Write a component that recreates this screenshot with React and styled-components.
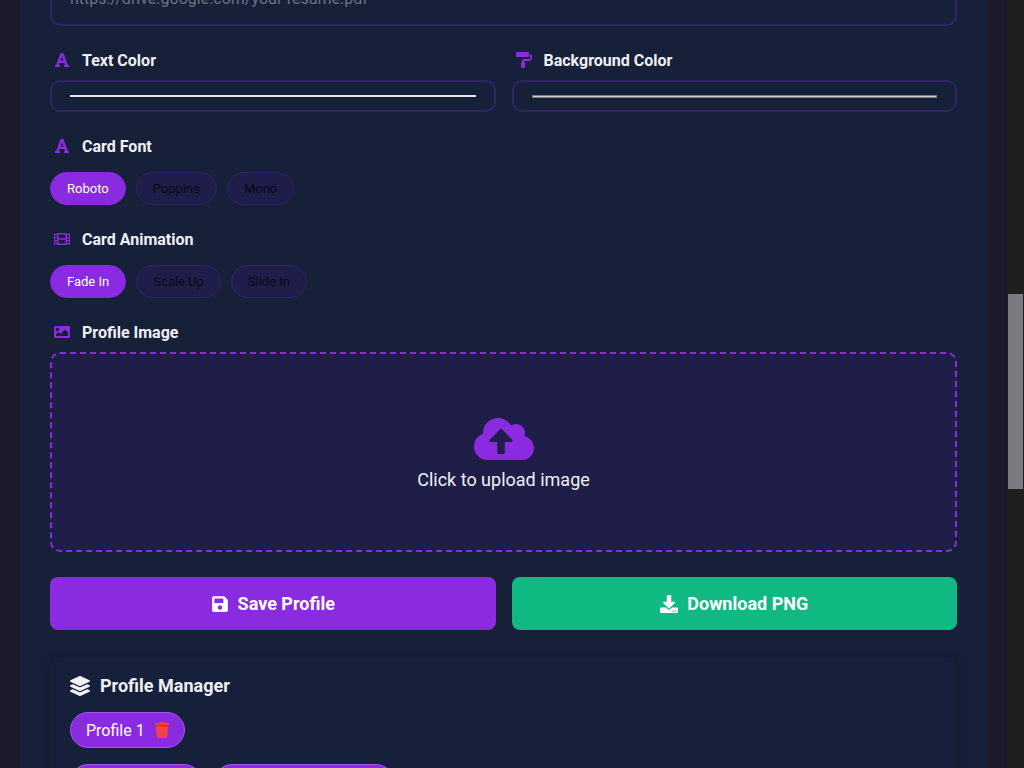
import React from 'react';
import styled, { createGlobalStyle } from 'styled-components';
import { FaFont, FaPaintRoller, FaFilm, FaImage, FaCloudUploadAlt, FaSave, FaDownload, FaLayerGroup, FaTrash } from 'react-icons/fa';

const Global = createGlobalStyle`
  html, body { margin: 0; height: 768px; overflow: hidden; background: #1b1a2b; }
  body { font-family: Roboto, "Liberation Sans", sans-serif; }
`;

const Page = styled.div`
  display: flex;
  height: 768px;
`;

const Gutter = styled.div`
  width: ${p => p.w}px;
  flex-shrink: 0;
`;

const Panel = styled.div`
  width: 967px;
  background: #172039;
  padding: 0 30px;
  box-sizing: border-box;
  overflow: hidden;
`;

const Inner = styled.div`
  margin-top: -30px;
  display: flex;
  flex-direction: column;
`;

const Scrollbar = styled.div`
  width: 17px;
  background: #1f1f1f;
  display: flex;
  flex-direction: column;
  padding-top: 294px;
  box-sizing: border-box;
  .thumb { height: 195px; background: #7a7a80; margin: 0 1px; }
`;

const UrlInput = styled.div`
  height: 56px;
  border: 2px solid #2e2466;
  border-radius: 10px;
  padding: 0 18px;
  color: #6b7280;
  font-size: 16px;
  display: flex;
  align-items: center;
  box-sizing: border-box;
  margin-bottom: 24px;
`;

const Row = styled.div`
  display: grid;
  grid-template-columns: 1fr 1fr;
  gap: 16px;
`;

const Field = styled.div`
  margin-bottom: ${p => p.mb || 24}px;
`;

const Label = styled.div`
  display: flex;
  align-items: center;
  gap: 11px;
  color: #f1f1f5;
  font-weight: 700;
  font-size: 16px;
  height: 20px;
  margin-bottom: 10px;
  svg { color: #8a2be2; width: 18px; height: 16px; margin-left: 3px; }
`;

const ColorBox = styled.div`
  height: 32px;
  border: 2px solid #2e2466;
  border-radius: 10px;
  box-sizing: border-box;
  display: flex;
  align-items: center;
  padding: 0 18px;
  .line {
    flex: 1;
    height: ${p => p.light ? 2 : 3}px;
    background: ${p => p.light ? '#e8e8e8' : '#cfcfcf'};
    border: ${p => p.light ? 'none' : '1px solid #7c7c7c'};
    box-sizing: border-box;
  }
`;

const Chips = styled.div`
  display: flex;
  gap: 10px;
  margin-top: 16px;
`;

const Chip = styled.div`
  height: 33px;
  padding: 0 16px;
  border-radius: 17px;
  box-sizing: border-box;
  display: flex;
  align-items: center;
  font-size: 13px;
  background: ${p => p.active ? '#8a2be2' : '#1f1d4a'};
  border: 1px solid ${p => p.active ? '#8a2be2' : '#2e2466'};
  color: ${p => p.active ? '#fff' : '#0a0a14'};
`;

const Upload = styled.div`
  height: 200px;
  border: 2px dashed #8a2be2;
  border-radius: 10px;
  background: #1e1e48;
  box-sizing: border-box;
  display: flex;
  flex-direction: column;
  align-items: center;
  justify-content: center;
  gap: 6px;
  color: #f1f1f5;
  font-size: 18px;
  svg { color: #8a2be2; width: 64px; height: 48px; }
`;

const Buttons = styled.div`
  display: grid;
  grid-template-columns: 1fr 1fr;
  gap: 16px;
  margin-top: 1px;
  margin-bottom: 27px;
`;

const Button = styled.div`
  height: 53px;
  border-radius: 8px;
  background: ${p => p.bg};
  color: #fff;
  font-size: 18px;
  font-weight: 700;
  display: flex;
  align-items: center;
  justify-content: center;
  gap: 9px;
  svg { width: 18px; height: 18px; }
`;

const Card = styled.div`
  background: #16203a;
  border-radius: 10px;
  box-shadow: 0 0 8px rgba(0,0,0,0.25);
  padding: 18px 20px;
`;

const CardTitle = styled.div`
  display: flex;
  align-items: center;
  gap: 10px;
  color: #f1f1f5;
  font-size: 18px;
  font-weight: 700;
  margin-bottom: 16px;
  svg { width: 20px; height: 20px; }
`;

const ProfileChip = styled.div`
  display: inline-flex;
  align-items: center;
  gap: 10px;
  height: 36px;
  padding: 0 15px;
  border-radius: 18px;
  background: #8a2be2;
  border: 1px solid #a259ee;
  color: #fff;
  font-size: 16px;
  box-sizing: border-box;
  width: ${p => p.w || 'auto'};
  svg { color: #ef4444; width: 14px; height: 16px; }
`;

const ProfileRow = styled.div`
  display: flex;
  gap: 12px;
  margin-bottom: 16px;
`;

export default function App() {
  return (
    <Page>
      <Global />
      <Gutter w={20} />
      <Panel>
        <Inner>
          <UrlInput>https://drive.google.com/your-resume.pdf</UrlInput>
          <Row>
            <Field>
              <Label><FaFont />Text Color</Label>
              <ColorBox light><div className="line" /></ColorBox>
            </Field>
            <Field>
              <Label><FaPaintRoller />Background Color</Label>
              <ColorBox><div className="line" /></ColorBox>
            </Field>
          </Row>
          <Field>
            <Label><FaFont />Card Font</Label>
            <Chips>
              <Chip active>Roboto</Chip>
              <Chip>Poppins</Chip>
              <Chip>Mono</Chip>
            </Chips>
          </Field>
          <Field>
            <Label><FaFilm />Card Animation</Label>
            <Chips>
              <Chip active>Fade In</Chip>
              <Chip>Scale Up</Chip>
              <Chip>Slide In</Chip>
            </Chips>
          </Field>
          <Field>
            <Label><FaImage />Profile Image</Label>
            <Upload>
              <FaCloudUploadAlt />
              <div>Click to upload image</div>
            </Upload>
          </Field>
          <Buttons>
            <Button bg="#8a2be2"><FaSave />Save Profile</Button>
            <Button bg="#10b981"><FaDownload />Download PNG</Button>
          </Buttons>
          <Card>
            <CardTitle><FaLayerGroup />Profile Manager</CardTitle>
            <ProfileRow>
              <ProfileChip>Profile 1<FaTrash /></ProfileChip>
            </ProfileRow>
            <ProfileRow>
              <ProfileChip w="132px">Save</ProfileChip>
              <ProfileChip w="180px">Load</ProfileChip>
            </ProfileRow>
          </Card>
        </Inner>
      </Panel>
      <Gutter w={20} />
      <Scrollbar><div className="thumb" /></Scrollbar>
    </Page>
  );
}
